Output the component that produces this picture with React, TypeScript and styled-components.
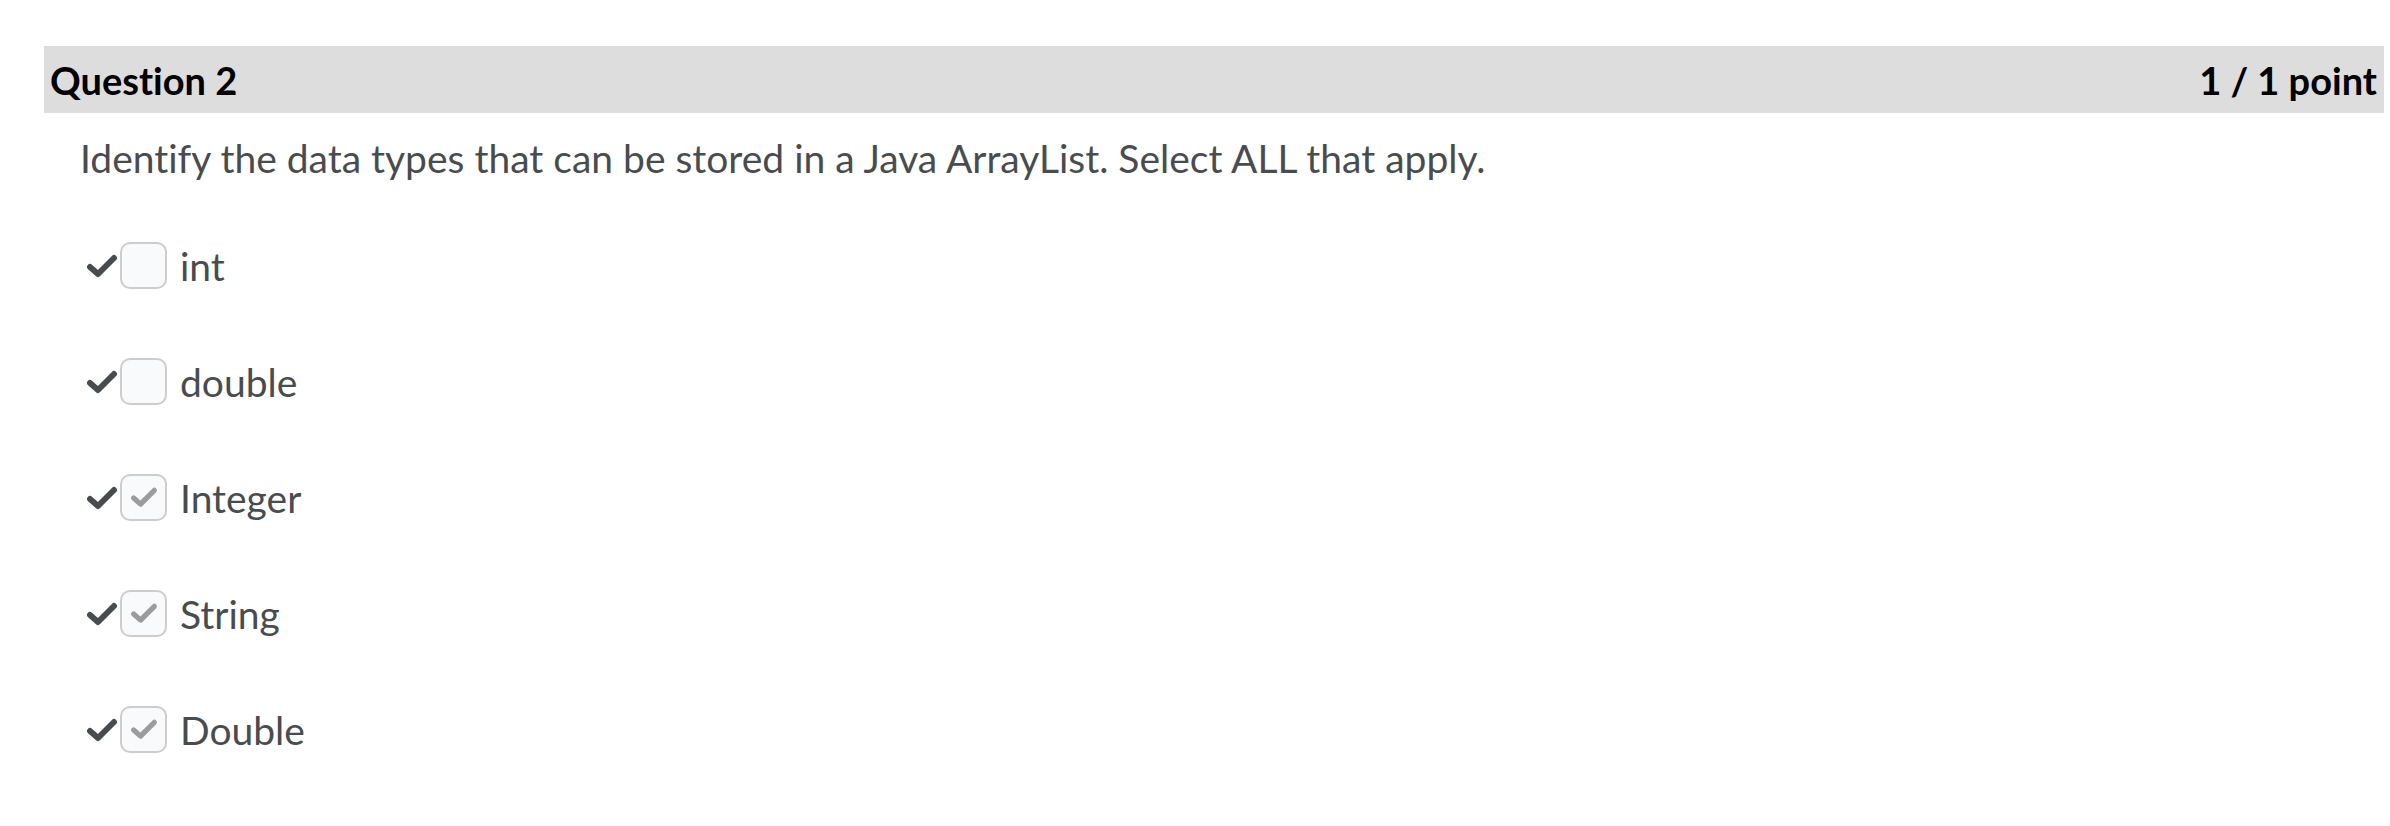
import styled, { createGlobalStyle } from "styled-components";

const GlobalStyle = createGlobalStyle`
  html, body {
    margin: 0;
    padding: 0;
    background: #ffffff;
  }
  body {
    font-family: Lato, "Open Sans", "Liberation Sans", sans-serif;
    font-variant-ligatures: none;
    color: #494c4e;
  }
`;

const Page = styled.div`
  padding: 46px 6px 0 44px;
`;

const Header = styled.div`
  display: flex;
  justify-content: space-between;
  align-items: center;
  height: 67px;
  padding: 0 7px 0 6px;
  background: #dddddd;
  color: #000000;
  font-size: 38px;
  font-weight: 700;
`;

const Prompt = styled.div`
  margin: 22px 0 0 36px;
  font-size: 39px;
  line-height: 46px;
`;

const Options = styled.div`
  display: flex;
  flex-direction: column;
  gap: 69px;
  margin: 61px 0 0 42px;
`;

const Row = styled.div`
  display: flex;
  align-items: center;
  height: 47px;
`;

const Mark = styled.svg`
  width: 32px;
  height: 26px;
  margin-right: 2px;
`;

const Box = styled.div`
  display: flex;
  align-items: center;
  justify-content: center;
  box-sizing: border-box;
  width: 47px;
  height: 47px;
  border: 2px solid #cdcdcd;
  border-radius: 10px;
  background: #f9fafc;
`;

const Label = styled.span`
  margin-left: 13px;
  font-size: 39px;
`;

const options = [
  { label: "int", checked: false },
  { label: "double", checked: false },
  { label: "Integer", checked: true },
  { label: "String", checked: true },
  { label: "Double", checked: true },
];

function Check({ color, size }: { color: string; size: number }) {
  return (
    <svg width={size} height={size * 0.8} viewBox="0 0 32 26">
      <path
        d="M4 14 L12 21 L28 5"
        fill="none"
        stroke={color}
        strokeWidth={6}
        strokeLinecap="round"
        strokeLinejoin="round"
      />
    </svg>
  );
}

export default function App() {
  return (
    <Page>
      <GlobalStyle />
      <Header>
        <span>Question 2</span>
        <span>1 / 1 point</span>
      </Header>
      <Prompt>
        Identify the data types that can be stored in a Java ArrayList. Select
        ALL that apply.
      </Prompt>
      <Options>
        {options.map((o) => (
          <Row key={o.label}>
            <Mark viewBox="0 0 32 26">
              <path
                d="M4 14 L12 21 L28 5"
                fill="none"
                stroke="#494c4e"
                strokeWidth={6}
                strokeLinecap="round"
                strokeLinejoin="round"
              />
            </Mark>
            <Box>{o.checked && <Check color="#9b9c9e" size={28} />}</Box>
            <Label>{o.label}</Label>
          </Row>
        ))}
      </Options>
    </Page>
  );
}
